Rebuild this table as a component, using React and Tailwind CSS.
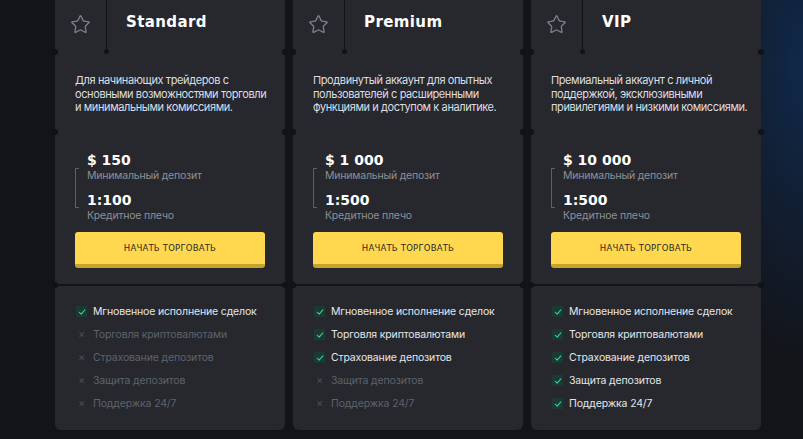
import { Star } from 'lucide-react';

const features = [
  'Мгновенное исполнение сделок',
  'Торговля криптовалютами',
  'Страхование депозитов',
  'Защита депозитов',
  'Поддержка 24/7',
];

const plans = [
  {
    name: 'Standard',
    desc: ['Для начинающих трейдеров с', 'основными возможностями торговли', 'и минимальными комиссиями.'],
    deposit: '$ 150',
    leverage: '1:100',
    enabled: 1,
  },
  {
    name: 'Premium',
    desc: ['Продвинутый аккаунт для опытных', 'пользователей с расширенными', 'функциями и доступом к аналитике.'],
    deposit: '$ 1 000',
    leverage: '1:500',
    enabled: 3,
  },
  {
    name: 'VIP',
    desc: ['Премиальный аккаунт с личной', 'поддержкой, эксклюзивными', 'привилегиями и низкими комиссиями.'],
    deposit: '$ 10 000',
    leverage: '1:500',
    enabled: 5,
  },
];

const techFont = { fontFamily: '"DejaVu Sans", sans-serif' };
const bodyFont = { fontFamily: 'Inter, sans-serif' };

// small notch dots at the card edges
const Notch = ({ top }) => (
  <>
    <span className={`absolute left-[-3px] ${top} w-[6px] h-[6px] rounded-full bg-[#111216]`} />
    <span className={`absolute right-[-3px] ${top} w-[6px] h-[6px] rounded-full bg-[#111216]`} />
  </>
);

const CheckBox = () => (
  <span className="w-[11px] h-[11px] flex items-center justify-center bg-[#1c3a31] shrink-0">
    <svg width="8" height="8" viewBox="0 0 10 10" fill="none">
      <path d="M1.5 5.3 L4 7.6 L8.6 2.4" stroke="#34d399" strokeWidth="1.3" strokeLinecap="round" strokeLinejoin="round" />
    </svg>
  </span>
);

const PlanCard = ({ plan }) => (
  <div className="relative w-[230px] flex flex-col gap-[2px]">
    <div className="relative bg-[#26282e] h-[284px] flex flex-col">
      <Notch top="top-[49px]" />
      <Notch top="top-[129px]" />

      {/* Header */}
      <div className="h-[52px] flex items-stretch">
        <div className="relative w-[52px] flex items-center justify-center border-r border-[#121317] pb-[4px]">
          <Star className="w-[21px] h-[21px] text-[#7b8089]" strokeWidth={1.5} />
          <span className="absolute right-[-3px] bottom-[-2px] w-[5px] h-[5px] rounded-full bg-[#121317]" />
        </div>
        <div className="flex items-center pl-[19px] pb-[7px]">
          <h3 className="text-[15px] font-bold text-white tracking-[0.4px]" style={techFont}>
            {plan.name}
          </h3>
        </div>
      </div>

      {/* Description */}
      <div className="h-[80px] px-5 pt-[22px]">
        <p className="text-[11px] leading-[13.5px] tracking-[-0.4px] text-[#dcdee2]" style={bodyFont}>
          {plan.desc.map((line) => (
            <span key={line} className="block whitespace-nowrap">{line}</span>
          ))}
        </p>
      </div>

      {/* Pricing */}
      <div className="relative flex-1 px-5 pt-[19px]">
        <span className="absolute left-5 top-[36px] w-[4px] h-[40px] border-l border-y border-[#5d616a]" />
        <div className="pl-3 flex flex-col gap-[8px]">
          <div>
            <div className="text-[14px] leading-[18px] font-bold text-white" style={techFont}>{plan.deposit}</div>
            <div className="text-[10.5px] leading-[14px] tracking-[-0.2px] text-[#8c9098]" style={bodyFont}>Минимальный депозит</div>
          </div>
          <div>
            <div className="text-[14px] leading-[18px] font-bold text-white" style={techFont}>{plan.leverage}</div>
            <div className="text-[10.5px] leading-[14px] tracking-[-0.2px] text-[#8c9098]" style={bodyFont}>Кредитное плечо</div>
          </div>
        </div>
        <button
          className="mt-[9px] w-full h-[36px] rounded-[3px] bg-[#ffd84f] border-b-[4px] border-[#c9a22b] text-[8.5px] font-medium text-[#2b2a25] tracking-[0.2px]"
          style={techFont}
        >
          НАЧАТЬ ТОРГОВАТЬ
        </button>
      </div>
    </div>

    <Notch top="top-[282px]" />

    {/* Features */}
    <div className="bg-[#26282e] h-[144px] rounded-b-[6px] pl-[21px] pt-[14px]" style={bodyFont}>
      {features.map((f, i) => {
        const on = i < plan.enabled;
        return (
          <div key={f} className="h-[23px] flex items-center gap-[6px] text-[10.5px] tracking-[-0.15px]">
            {on ? (
              <CheckBox />
            ) : (
              <span className="w-[11px] flex justify-center text-[11px] text-[#4a4e56]">×</span>
            )}
            <span className={on ? 'text-[#e4e6ea]' : 'text-[#5e626a]'}>{f}</span>
          </div>
        );
      })}
    </div>
  </div>
);

export default function App() {
  return (
    <div className="relative w-[803px] h-[439px] overflow-hidden bg-[#131419] bg-[radial-gradient(110px_300px_at_100%_15%,#10294b,transparent)]">
      <div className="flex gap-2 pl-[55px]">
        {plans.map((p) => (
          <PlanCard key={p.name} plan={p} />
        ))}
      </div>
    </div>
  );
}
